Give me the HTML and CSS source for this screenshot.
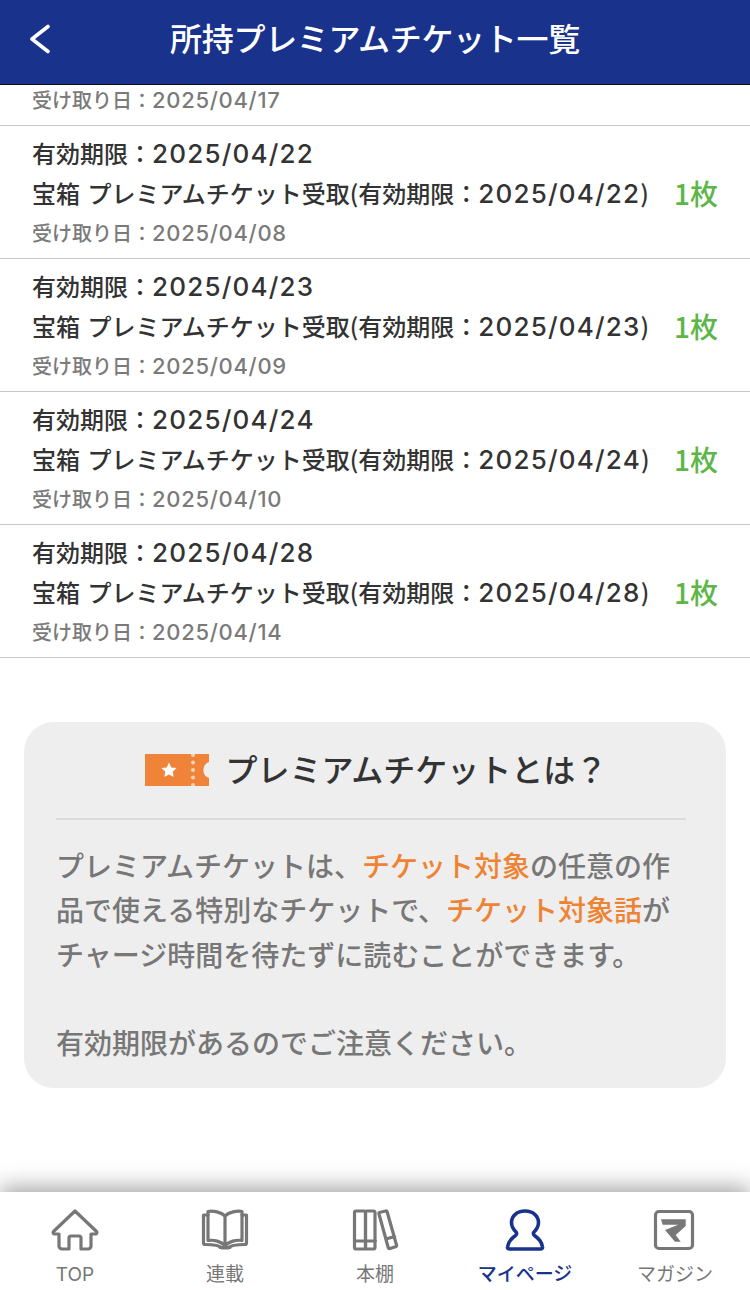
FILE: index.html
```html
<!DOCTYPE html>
<html lang="ja">
<head>
<meta charset="utf-8">
<title>所持プレミアムチケット一覧</title>
<link rel="stylesheet" href="styles.css">
</head>
<body>
<div class="app">
  <header class="topbar">
    <svg class="back" viewBox="0 0 24 30" aria-hidden="true"><path d="M21 2.500 5 15l16 12.500"/></svg>
    <h1 class="title">所持プレミアムチケット一覧</h1>
  </header>
  <main class="content">
    <ul class="list">
      <li class="row row-cut"><p class="received">受け取り日：<span class="num">2025/04/17</span></p></li>
      <li class="row">
        <p class="expiry">有効期限：<span class="num">2025/04/22</span></p>
        <div class="mid"><p class="desc">宝箱 プレミアムチケット受取(有効期限：<span class="num">2025/04/22</span>)</p><span class="count">1枚</span></div>
        <p class="received">受け取り日：<span class="num">2025/04/08</span></p>
      </li>
      <li class="row">
        <p class="expiry">有効期限：<span class="num">2025/04/23</span></p>
        <div class="mid"><p class="desc">宝箱 プレミアムチケット受取(有効期限：<span class="num">2025/04/23</span>)</p><span class="count">1枚</span></div>
        <p class="received">受け取り日：<span class="num">2025/04/09</span></p>
      </li>
      <li class="row">
        <p class="expiry">有効期限：<span class="num">2025/04/24</span></p>
        <div class="mid"><p class="desc">宝箱 プレミアムチケット受取(有効期限：<span class="num">2025/04/24</span>)</p><span class="count">1枚</span></div>
        <p class="received">受け取り日：<span class="num">2025/04/10</span></p>
      </li>
      <li class="row">
        <p class="expiry">有効期限：<span class="num">2025/04/28</span></p>
        <div class="mid"><p class="desc">宝箱 プレミアムチケット受取(有効期限：<span class="num">2025/04/28</span>)</p><span class="count">1枚</span></div>
        <p class="received">受け取り日：<span class="num">2025/04/14</span></p>
      </li>
    </ul>
    <section class="card">
      <div class="card-head">
        <svg class="ticket" viewBox="0 0 64 32" aria-hidden="true">
          <path class="ticket-body" d="M0 0H64V8A8.500 8.500 0 0 0 64 24V32H0Z"/>
          <path class="ticket-star" d="M24 8.500l2.300 4.900 5.300.7-3.900 3.700 1 5.300-4.700-2.600-4.700 2.600 1-5.300-3.900-3.700 5.300-.7Z"/>
          <g class="ticket-holes"><circle cx="48" cy="1" r="2"/><circle cx="48" cy="8.500" r="2"/><circle cx="48" cy="16" r="2"/><circle cx="48" cy="23.500" r="2"/><circle cx="48" cy="31" r="2"/></g>
        </svg>
        <h2 class="card-title">プレミアムチケットとは？</h2>
      </div>
      <p class="card-text">プレミアムチケットは、<em>チケット対象</em>の任意の作品で使える特別なチケットで、<em>チケット対象話</em>がチャージ時間を待たずに読むことができます。</p>
      <p class="card-text card-note">有効期限があるのでご注意ください。</p>
    </section>
  </main>
  <nav class="tabs">
    <a class="tab">
      <svg class="tab-icon" viewBox="0 0 50 42"><path d="M25 2 3.500 22.500a1.500 1.500 0 0 0 1 2.500H9v12a3 3 0 0 0 3 3h7V29a2 2 0 0 1 2-2h8a2 2 0 0 1 2 2v11h7a3 3 0 0 0 3-3V25h4.500a1.500 1.500 0 0 0 1-2.500Z"/></svg>
      <span class="tab-label">TOP</span>
    </a>
    <a class="tab">
      <svg class="tab-icon" viewBox="0 0 50 42"><path d="M25 7C21 3 13 1.500 8 2.500v29c6-1 13 1 17 5 4-4 11-6 17-5v-29C37 1.500 29 3 25 7Zm0 0v29"/><path d="M8 6H3.500v28a1.500 1.500 0 0 0 1.500 1.500c6 0 14 0 17 3.500h6c3-3.500 11-3.500 17-3.500a1.500 1.500 0 0 0 1.500-1.500V6H42"/><path d="M20 38.500h10"/></svg>
      <span class="tab-label">連載</span>
    </a>
    <a class="tab">
      <svg class="tab-icon" viewBox="0 0 50 42"><path d="M4.500 3.500a1.500 1.500 0 0 1 1.500-1.500h8a1.500 1.500 0 0 1 1.500 1.500V38.500a1.500 1.500 0 0 1-1.500 1.500h-8a1.500 1.500 0 0 1-1.500-1.500ZM4.500 32h11"/><path d="M15.500 3.500a1.500 1.500 0 0 1 1.500-1.500h6.500a1.500 1.500 0 0 1 1.500 1.500V38.500a1.500 1.500 0 0 1-1.500 1.500h-6.500a1.500 1.500 0 0 1-1.500-1.500ZM15.500 32h10"/><path d="M29.500 3.500 35.500 2a1.500 1.500 0 0 1 1.700 1L46.500 36a1.500 1.500 0 0 1-1 1.800l-5.500 1.700a1.500 1.500 0 0 1-1.800-1L29 5a1.200 1.200 0 0 1 .5-1.500ZM36 30l8.500-2.500"/></svg>
      <span class="tab-label">本棚</span>
    </a>
    <a class="tab tab-active">
      <svg class="tab-icon" viewBox="0 0 50 42"><path d="M25 2c-8 0-13.500 5-13.500 11.500 0 4 2 7 4.500 9.500 1 1 .8 2.500-.5 3.500C10.500 30 8 34 7.500 38c-.2 1.300.7 2 2 2h31c1.300 0 2.200-.7 2-2-.5-4-3-8-8-11.500-1.300-1-1.500-2.500-.5-3.500 2.500-2.500 4.500-5.500 4.500-9.500C38.500 7 33 2 25 2Z"/></svg>
      <span class="tab-label">マイページ</span>
    </a>
    <a class="tab">
      <svg class="tab-icon" viewBox="0 0 50 42"><rect x="5.500" y="2.500" width="37" height="37" rx="3.500"/><path class="tab-mark" d="M11 10.300H35.700V17L25.700 26 30.700 32.700H25L15 21 28.300 15.700H12.700Z"/></svg>
      <span class="tab-label">マガジン</span>
    </a>
  </nav>
</div>
</body>
</html>
```
FILE: styles.css
```css
* { box-sizing: border-box; }
html, body { margin: 0; padding: 0; background: #fff; }
body { font-family: "Noto Sans CJK JP", sans-serif; color: #333; }
p, h1, h2, ul { margin: 0; padding: 0; }
ul { list-style: none; }
em { font-style: normal; }

.app { width: 750px; height: 1290px; display: flex; flex-direction: column; overflow: hidden; }

.topbar { position: relative; height: 85px; flex: none; background: #19338c; border-bottom: 1px solid #111; display: flex; align-items: center; justify-content: center; padding-bottom: 10px; }
.back { position: absolute; left: 27px; top: 24px; width: 24px; height: 30px; fill: none; stroke: #fff; stroke-width: 3.600; stroke-linecap: round; stroke-linejoin: round; }
.title { font-size: 32px; font-weight: 500; line-height: 40px; color: #fff; letter-spacing: -.3px; }

.content { flex: 1; min-height: 0; overflow: hidden; }

.row { height: 133px; border-bottom: 1px solid #c8c8c8; padding: 8px 32px 0; }
.row-cut { height: 41px; padding-top: 0; }
.row-cut .received { line-height: 30px; }

.expiry { font-size: 24px; font-weight: 500; line-height: 38px; color: #333; }
.desc { font-size: 24px; font-weight: 500; line-height: 40px; color: #333; white-space: nowrap; word-spacing: 2px; }
.num { font-family: Inter, "Noto Sans CJK JP", sans-serif; font-size: 26px; font-weight: 500; letter-spacing: 1.200px; }
.mid { display: flex; justify-content: space-between; align-items: center; height: 40px; }
.count { font-size: 28px; font-weight: 500; line-height: 40px; color: #5cb648; }
.received { font-size: 20px; font-weight: 500; line-height: 40px; color: #7a7a7a; }
.received .num { font-size: 22px; letter-spacing: .7px; }

.card { width: 702px; height: 366px; margin: 64px auto 0; padding: 0 40px 0 32px; background: #eee; border-radius: 30px; }
.card-head { height: 98px; border-bottom: 2px solid #dcdcdc; display: flex; align-items: center; justify-content: center; gap: 17px; padding-left: 10px; }
.ticket { width: 64px; height: 32px; flex: none; }
.ticket-body { fill: #ee8339; }
.ticket-star { fill: #fff; }
.ticket-holes { fill: #f9d3b5; }
.card-title { font-size: 32px; font-weight: 500; line-height: 40px; padding-bottom: 4px; color: #333; }
.card-text { font-size: 28px; font-weight: 500; line-height: 44.250px; color: #777; margin-top: 23px; }
.card-text em { color: #ee8433; }
.card-note { margin-top: 44.250px; }

.tabs { flex: none; height: 98px; background: #fff; display: flex; box-shadow: 0 -4px 22px rgba(0, 0, 0, .38); position: relative; }
.tab { width: 150px; display: flex; flex-direction: column; align-items: center; padding-top: 17px; color: #777; }
.tab-icon { width: 50px; height: 42px; flex: none; fill: none; stroke: #777; stroke-width: 3.200; stroke-linejoin: round; stroke-linecap: round; }
.tab-mark { fill: #777; stroke: none; }
.tab-label { font-family: Inter, "Noto Sans CJK JP", sans-serif; font-size: 19px; line-height: 24px; margin-top: 12px; white-space: nowrap; }
.tab-active { color: #19338c; }
.tab-active .tab-icon { stroke: #19338c; stroke-width: 3.600; }
.tab-active .tab-label { font-weight: 500; }
```
